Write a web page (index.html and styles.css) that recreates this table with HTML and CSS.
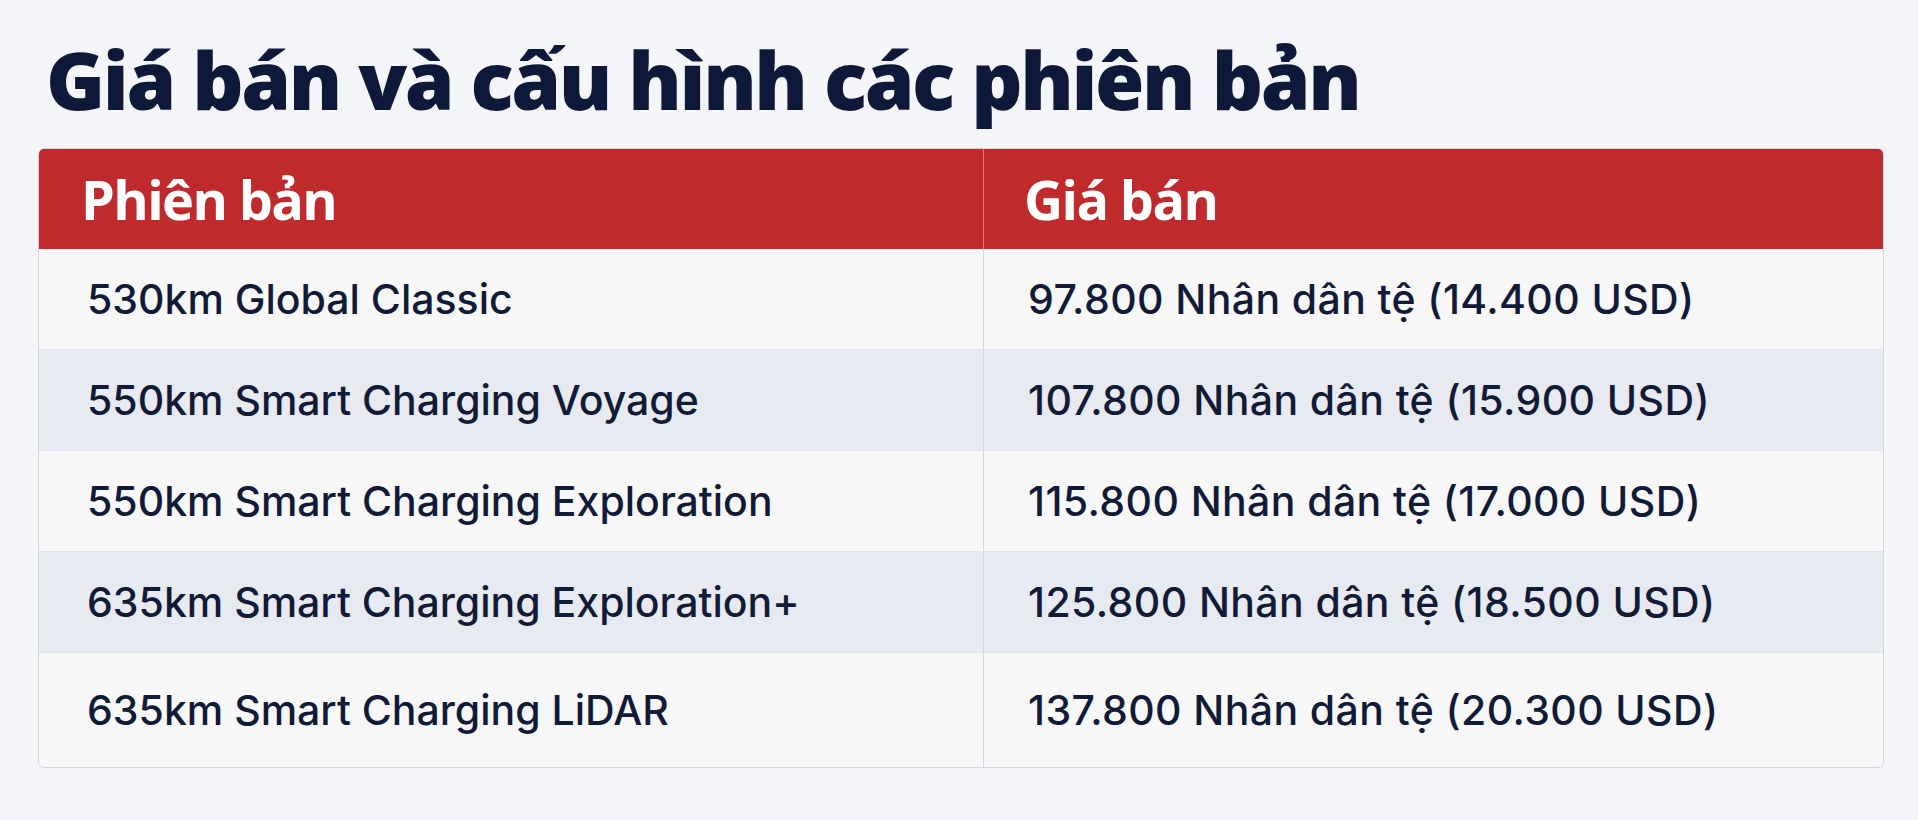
FILE: index.html
```html
<!DOCTYPE html>
<html lang="vi">
<head>
<meta charset="utf-8">
<title>Giá bán và cấu hình các phiên bản</title>
<link rel="stylesheet" href="styles.css">
</head>
<body>
<main class="page">
  <h1 class="title">Giá bán và cấu hình các phiên bản</h1>
  <div class="table">
    <div class="row head">
      <div class="cell">Phiên bản</div>
      <div class="cell">Giá bán</div>
    </div>
    <div class="row odd">
      <div class="cell">530km Global Classic</div>
      <div class="cell">97.800 Nhân dân tệ (14.400 USD)</div>
    </div>
    <div class="row even">
      <div class="cell">550km Smart Charging Voyage</div>
      <div class="cell">107.800 Nhân dân tệ (15.900 USD)</div>
    </div>
    <div class="row odd">
      <div class="cell">550km Smart Charging Exploration</div>
      <div class="cell">115.800 Nhân dân tệ (17.000 USD)</div>
    </div>
    <div class="row even">
      <div class="cell">635km Smart Charging Exploration+</div>
      <div class="cell">125.800 Nhân dân tệ (18.500 USD)</div>
    </div>
    <div class="row odd last">
      <div class="cell">635km Smart Charging LiDAR</div>
      <div class="cell">137.800 Nhân dân tệ (20.300 USD)</div>
    </div>
  </div>
</main>
</body>
</html>
```

FILE: styles.css
```css
html, body {
  margin: 0;
  padding: 0;
}
body {
  background: #f4f5f8;
  font-family: "Inter", "Open Sans", "Liberation Sans", sans-serif;
  color: #111a36;
  width: 1918px;
  height: 820px;
  overflow: hidden;
}
.page {
  padding: 26px 34px 0 38px;
}
.title {
  margin: 0 0 0 8px;
  font-family: "Open Sans", "Noto Sans", sans-serif;
  font-size: 80px;
  font-weight: 800;
  line-height: 106px;
  letter-spacing: -2.4px;
  color: #0e1838;
  height: 122px;
}
.table {
  border: 1px solid #cfd6e2;
  border-radius: 6px;
  overflow: hidden;
  background: #f7f7f9;
}
.row {
  display: grid;
  grid-template-columns: 944px 1fr;
  height: 100px;
  border-bottom: 1px solid #dfe3ea;
}
.row.last {
  border-bottom: none;
  height: 114px;
}
.cell {
  display: flex;
  align-items: center;
  padding-left: 48px;
  font-size: 41px;
  font-weight: 450;
  color: #111a36;
}
.cell + .cell {
  border-left: 1px solid #cdd5e1;
  padding-left: 44px;
  letter-spacing: 0.4px;
}
.head {
  background: #bf2a2d;
  height: 100px;
  border-bottom: none;
}
.head .cell {
  font-family: "Open Sans", "Noto Sans", sans-serif;
  color: #ffffff;
  font-weight: 700;
  font-size: 54px;
  letter-spacing: -1.6px;
  padding-left: 42px;
}
.head .cell + .cell {
  border-left: 1px solid #e07a7a;
  padding-left: 40px;
}
.odd {
  background: #f7f7f8;
}
.even {
  background: #e7eaf0;
}
```
